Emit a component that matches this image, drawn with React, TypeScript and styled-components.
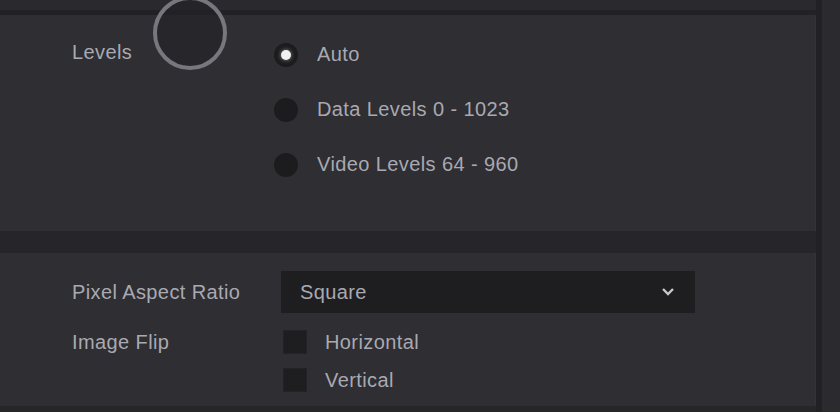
import React from 'react'
import styled, { createGlobalStyle } from 'styled-components'

const GlobalStyle = createGlobalStyle`
	html, body {
		margin: 0;
		padding: 0;
		background: #26262a;
	}
	body {
		font-family: 'Liberation Sans', Arial, sans-serif;
	}
`

const Screen = styled.div`
	position: relative;
	display: grid;
	grid-template-columns: 816px 1fr;
	width: 840px;
	height: 412px;
	overflow: hidden;
	background: #26262a;
`

const MainColumn = styled.div`
	display: flex;
	flex-direction: column;
`

const TopBand = styled.div`
	height: 10px;
	background: #29292e;
	border-bottom: 5px solid #222226;
`

const SideStrip = styled.div`
	background: #2a2a2f;
	border-left: 6px solid #222226;
`

const Panel = styled.section<{ $height: number; $padTop: number }>`
	height: ${(p) => p.$height}px;
	box-sizing: border-box;
	background: #2e2e33;
	border-right: 1px solid #333338;
	display: grid;
	grid-template-columns: 209px 1fr;
	align-content: start;
	align-items: center;
	row-gap: 17px;
	padding: ${(p) => p.$padTop}px 0 0 72px;
	& + & {
		margin-top: 22px;
	}
`

const Label = styled.div<{ $alignTop?: boolean; $offset?: number }>`
	align-self: ${(p) => (p.$alignTop ? 'start' : 'center')};
	margin-top: ${(p) => p.$offset ?? 0}px;
	font-size: 20px;
	letter-spacing: 0.4px;
	color: #a9a9b1;
	line-height: 24px;
	white-space: nowrap;
`

const RadioGroup = styled.div`
	display: flex;
	flex-direction: column;
	margin-left: -7px;
`

const RadioRow = styled.div`
	height: 55px;
	display: flex;
	align-items: center;
	gap: 19px;
`

const RadioDot = styled.span<{ $checked?: boolean }>`
	width: 24px;
	height: 24px;
	border-radius: 50%;
	background: #1c1c1f;
	display: flex;
	align-items: center;
	justify-content: center;
	&::after {
		content: '';
		width: 10px;
		height: 10px;
		border-radius: 50%;
		background: ${(p) => (p.$checked ? '#f0f0f2' : 'transparent')};
		box-shadow: ${(p) => (p.$checked ? '0 0 4px rgba(255,255,255,0.5)' : 'none')};
	}
`

const OptionText = styled.span`
	font-size: 20px;
	letter-spacing: 0.4px;
	color: #a9a9b1;
	white-space: nowrap;
`

const Select = styled.div`
	width: 414px;
	height: 42px;
	box-sizing: border-box;
	background: #1e1e21;
	display: flex;
	align-items: center;
	justify-content: space-between;
	padding: 0 20px 0 19px;
`

const CheckList = styled.div`
	display: flex;
	flex-direction: column;
	gap: 14px;
	padding-left: 2px;
`

const CheckRow = styled.div`
	display: flex;
	align-items: center;
	gap: 18px;
	height: 24px;
`

const CheckBox = styled.span`
	width: 24px;
	height: 24px;
	box-sizing: border-box;
	background: #1e1e21;
	border: 1px solid #232327;
`

const Cursor = styled.div`
	position: absolute;
	left: 153px;
	top: -4px;
	width: 74px;
	height: 74px;
	box-sizing: border-box;
	border-radius: 50%;
	border: 4px solid #77777d;
	background: rgba(34, 34, 39, 0.6);
	pointer-events: none;
`

const Chevron = () => (
	<svg width="14" height="10" viewBox="0 0 14 10">
		<polyline points="2,2 7,7 12,2" fill="none" stroke="#c8c8cc" strokeWidth="2.4" />
	</svg>
)

const levels = [
	{ text: 'Auto', checked: true },
	{ text: 'Data Levels 0 - 1023', checked: false },
	{ text: 'Video Levels 64 - 960', checked: false },
]

const flips = ['Horizontal', 'Vertical']

const App: React.FC = () => {
	return (
		<>
			<GlobalStyle />
			<Screen>
				<MainColumn>
					<TopBand />
					<Panel $height={216} $padTop={12}>
						<Label $alignTop $offset={13}>
							Levels
						</Label>
						<RadioGroup>
							{levels.map((l) => (
								<RadioRow key={l.text}>
									<RadioDot $checked={l.checked} />
									<OptionText>{l.text}</OptionText>
								</RadioRow>
							))}
						</RadioGroup>
					</Panel>
					<Panel $height={153} $padTop={18}>
						<Label>Pixel Aspect Ratio</Label>
						<Select>
							<OptionText>Square</OptionText>
							<Chevron />
						</Select>
						<Label $alignTop>Image Flip</Label>
						<CheckList>
							{flips.map((f) => (
								<CheckRow key={f}>
									<CheckBox />
									<OptionText>{f}</OptionText>
								</CheckRow>
							))}
						</CheckList>
					</Panel>
				</MainColumn>
				<SideStrip />
				<Cursor />
			</Screen>
		</>
	)
}

export default App
